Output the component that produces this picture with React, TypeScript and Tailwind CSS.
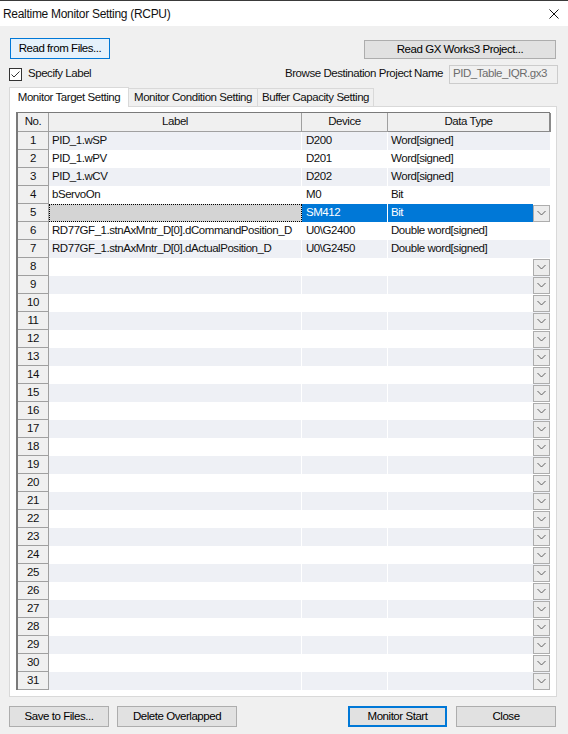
import React from 'react';

type Row = { label: string; device: string; type: string; selected?: boolean };

const filled: Row[] = [
  { label: 'PID_1.wSP', device: 'D200', type: 'Word[signed]' },
  { label: 'PID_1.wPV', device: 'D201', type: 'Word[signed]' },
  { label: 'PID_1.wCV', device: 'D202', type: 'Word[signed]' },
  { label: 'bServoOn', device: 'M0', type: 'Bit' },
  { label: '', device: 'SM412', type: 'Bit', selected: true },
  { label: 'RD77GF_1.stnAxMntr_D[0].dCommandPosition_D', device: 'U0\\G2400', type: 'Double word[signed]' },
  { label: 'RD77GF_1.stnAxMntr_D[0].dActualPosition_D', device: 'U0\\G2450', type: 'Double word[signed]' },
];

const rows: Row[] = [
  ...filled,
  ...Array.from({ length: 24 }, () => ({ label: '', device: '', type: '' })),
];

function DropButton() {
  return (
    <div className="w-[17px] h-[17px] shrink-0 border border-[#adadad] bg-[#ececec] flex items-center justify-center">
      <svg width="9" height="6" viewBox="0 0 9 6" fill="none">
        <path d="M0.5 1 L4.5 5 L8.5 1" stroke="#606060" strokeWidth="1" />
      </svg>
    </div>
  );
}

function Btn({ children, className }: { children: React.ReactNode; className: string }) {
  return (
    <div className={`flex items-center justify-center shrink-0 text-black ${className}`}>{children}</div>
  );
}

export default function App() {
  return (
    <div className="w-[568px] h-[734px] bg-[#f0f0f0] flex flex-col font-['Liberation_Sans',Arial,sans-serif] text-[11.5px] tracking-[-0.45px] text-[#111] overflow-hidden">
      {/* title bar */}
      <div className="h-[26px] shrink-0 bg-white border-t border-[#3a3a3a] flex items-center pl-[3px] pr-[9px]">
        <span className="text-[12px] tracking-[-0.3px]">Realtime Monitor Setting (RCPU)</span>
        <svg className="ml-auto" width="10" height="10" viewBox="0 0 10 10" fill="none">
          <path d="M0.5 0.5 L9.5 9.5 M9.5 0.5 L0.5 9.5" stroke="#111" strokeWidth="1" />
        </svg>
      </div>

      {/* buttons row */}
      <div className="mt-[12px] h-[21px] flex items-end">
        <Btn className="ml-[10px] w-[100px] h-[21px] border border-[#0078d7] bg-[#e5f1fb]">Read from Files...</Btn>
        <Btn className="ml-auto mr-[12px] w-[192px] h-[19px] border border-[#adadad] bg-[#e1e1e1]">Read GX Works3 Project...</Btn>
      </div>

      {/* label row */}
      <div className="mt-[5px] h-[20px] flex items-center">
        <div className="ml-[9px] w-[13px] h-[13px] border border-[#333] bg-white flex items-center justify-center">
          <svg width="11" height="11" viewBox="0 0 11 11" fill="none">
            <path d="M1.5 5.5 L4 8 L9.5 2.5" stroke="#333" strokeWidth="1" />
          </svg>
        </div>
        <span className="ml-[6px]">Specify Label</span>
        <span className="ml-auto">Browse Destination Project Name</span>
        <div className="ml-[6px] mr-[10px] w-[109px] h-[19px] border border-[#cccccc] bg-[#f0f0f0] text-[#6d6d6d] flex items-center pl-[3px] overflow-hidden whitespace-nowrap">
          PID_Table_IQR.gx3
        </div>
      </div>

      {/* tabs */}
      <div className="mt-[2px] ml-[9px] h-[20px] flex items-end relative z-10">
        <div className="w-[120px] h-[20px] -mb-px bg-white border-l border-t border-r border-[#d9d9d9] flex items-center justify-center">
          Monitor Target Setting
        </div>
        <div className="w-[129px] h-[18px] bg-[#f0f0f0] border-t border-r border-[#d9d9d9] flex items-center justify-center">
          Monitor Condition Setting
        </div>
        <div className="w-[116px] h-[18px] bg-[#f0f0f0] border-t border-r border-[#d9d9d9] flex items-center justify-center">
          Buffer Capacity Setting
        </div>
      </div>

      {/* panel */}
      <div className="ml-[9px] w-[548px] h-[591px] bg-white border border-[#d9d9d9] pt-[5px] pl-[6px]">
        <div className="w-[534px] border-l-2 border-t border-[#7a7a7a]">
          {/* header */}
          <div className="flex h-[19px]">
            <div className="w-[31px] shrink-0 bg-[#f0f0f0] border-r border-b border-[#a0a0a0] flex items-center justify-center">No.</div>
            <div className="w-[253px] shrink-0 bg-[#f0f0f0] border-r border-b border-[#a0a0a0] flex items-center justify-center">Label</div>
            <div className="w-[86px] shrink-0 bg-[#f0f0f0] border-r border-b border-[#a0a0a0] flex items-center justify-center">Device</div>
            <div className="w-[163px] shrink-0 bg-[#f0f0f0] border-r-2 border-b border-[#8a8a8a] flex items-center justify-center">Data Type</div>
          </div>
          {rows.map((r, i) => {
            const n = i + 1;
            const bg = n % 2 === 1 ? 'bg-[#eef0f5]' : 'bg-white';
            const hasDrop = r.selected || r.device === '';
            return (
              <div key={n} className="flex h-[18px]">
                <div className="w-[31px] shrink-0 bg-[#f0f0f0] border-r border-b border-[#a0a0a0] flex items-center justify-center">
                  {n}
                </div>
                {r.selected ? (
                  <>
                    <div className="w-[253px] shrink-0 bg-[#d4d4d4] border border-dotted border-black" />
                    <div className="w-[86px] shrink-0 bg-[#0078d7] text-white border-r border-white flex items-center pl-[4px]">
                      {r.device}
                    </div>
                    <div className="w-[162px] shrink-0 flex items-center">
                      <div className="flex-1 h-full bg-[#0078d7] text-white flex items-center pl-[3px]">{r.type}</div>
                      <DropButton />
                    </div>
                  </>
                ) : (
                  <>
                    <div className={`w-[253px] shrink-0 ${bg} border-r border-white flex items-center pl-[3px] overflow-hidden whitespace-nowrap`}>
                      {r.label}
                    </div>
                    <div className={`w-[86px] shrink-0 ${bg} border-r border-white flex items-center pl-[4px]`}>
                      {r.device}
                    </div>
                    <div className={`w-[162px] shrink-0 ${bg} flex items-center pl-[3px]`}>
                      <span className="flex-1">{r.type}</span>
                      {hasDrop && <DropButton />}
                    </div>
                  </>
                )}
              </div>
            );
          })}
        </div>
      </div>

      {/* bottom buttons */}
      <div className="mt-[9px] flex items-center">
        <Btn className="ml-[9px] w-[100px] h-[21px] border border-[#adadad] bg-[#e1e1e1]">Save to Files...</Btn>
        <Btn className="ml-[8px] w-[120px] h-[21px] border border-[#adadad] bg-[#e1e1e1]">Delete Overlapped</Btn>
        <Btn className="ml-auto w-[99px] h-[21px] border-2 border-[#0078d7] bg-[#e1e1e1]">Monitor Start</Btn>
        <Btn className="ml-[9px] mr-[12px] w-[100px] h-[21px] border border-[#adadad] bg-[#e1e1e1]">Close</Btn>
      </div>
    </div>
  );
}
